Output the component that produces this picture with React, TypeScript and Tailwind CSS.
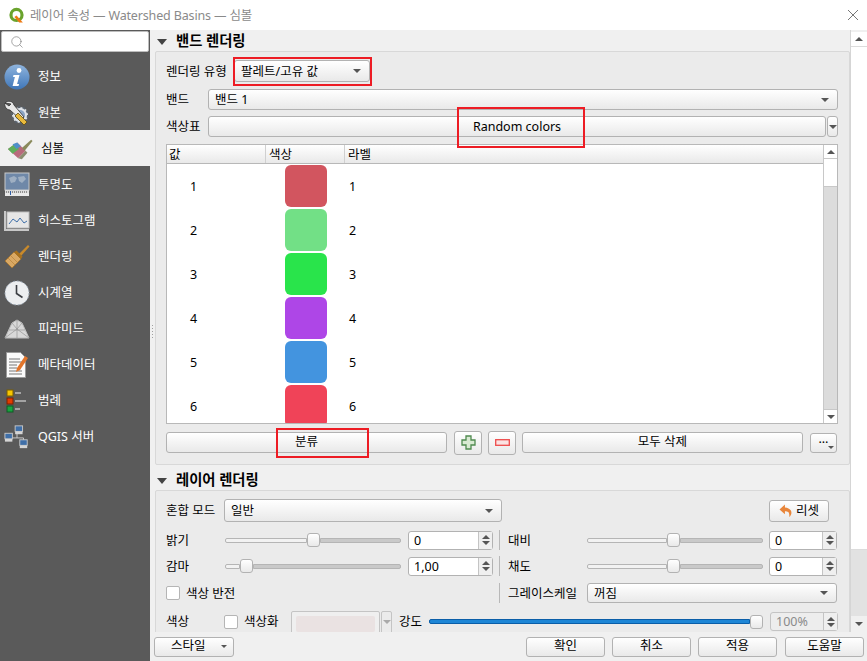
import type { ReactNode } from 'react';
import { Search } from 'lucide-react';

const FONT = "font-['Noto_Sans','Noto_Sans_CJK_KR',sans-serif]";
const BTN = 'border border-[#b2b2b2] rounded-[3px] bg-gradient-to-b from-white to-[#e9e9e9]';
// the fonts here sit a pixel higher than in the reference
const L = 'pt-[2px] whitespace-nowrap';

// small triangles used by combos, scrollbars and spin boxes
function Tri({ up, className = 'border-t-[#555]' }: { up?: boolean; className?: string }) {
  return up ? (
    <span className="block w-0 h-0 border-x-[4px] border-x-transparent border-b-[4px] border-b-[#555]" />
  ) : (
    <span className={`block w-0 h-0 border-x-[4px] border-x-transparent border-t-[4px] ${className}`} />
  );
}

function Logo() {
  return (
    <svg width="17" height="17" viewBox="0 0 16 16">
      <circle cx="8" cy="7.500" r="5.200" fill="none" stroke="#6aa32d" strokeWidth="3" />
      <path d="M8 8l6 6.500h-3.500L6 9.500z" fill="#ee7913" />
    </svg>
  );
}

const icons: Record<string, ReactNode> = {
  info: (
    <svg width="26" height="26" viewBox="0 0 26 26">
      <defs>
        <linearGradient id="ib" x1="0" y1="0" x2="0" y2="1">
          <stop offset="0" stopColor="#8fb4dd" />
          <stop offset="1" stopColor="#3f76b8" />
        </linearGradient>
      </defs>
      <circle cx="13" cy="13" r="12.500" fill="url(#ib)" />
      <circle cx="15" cy="6.500" r="2.400" fill="#fff" />
      <path d="M9.500 11h6l-2.400 9h2l-.6 2H8.600l2.300-9H9z" fill="#fff" />
    </svg>
  ),
  source: (
    <svg width="26" height="26" viewBox="0 0 26 26">
      <circle cx="16" cy="15" r="8" fill="#dfe3e8" stroke="#59626c" strokeWidth="2" strokeDasharray="3 2" />
      <circle cx="16" cy="15" r="5" fill="#8aa4c4" />
      <path d="M1 3c3-3 8-2 9 2l10 12-3 3L6 10C3 10 0 7 1 3l4 3 2-2z" fill="#e8e8e8" stroke="#333" strokeWidth=".8" />
      <path d="M14 13l9 9-3 3-9-9z" fill="#e8b93c" stroke="#5c4a12" strokeWidth=".8" />
    </svg>
  ),
  symbol: (
    <svg width="28" height="24" viewBox="0 0 28 24">
      <path d="M1 12L11 5l9 9-8 8z" fill="#b86a7c" />
      <path d="M1 12L8 7l5 5-7 5z" fill="#5fae5a" />
      <path d="M6 7l5-2 4 4-5 3z" fill="#4f8fc9" />
      <path d="M12 22l8-8 2 2-6 7z" fill="#8b8d70" />
      <path d="M16 11L26 2l1.500 1.500L19 14z" fill="#8a8a5c" />
    </svg>
  ),
  transparency: (
    <svg width="26" height="26" viewBox="0 0 26 26">
      <rect x="1" y="1" width="24" height="17" fill="#6f88a8" stroke="#c9c9c9" />
      <path d="M5 6l5-2 3 2-2 4-4 1zM14 5l6-1 2 3-4 4-3-2z" fill="#9fafc2" />
      <rect x="1" y="18" width="24" height="3" fill="#dcdcdc" />
      <rect x="1" y="21" width="24" height="3" fill="#e8e8e8" />
      <path d="M2 20h22" stroke="#444" strokeDasharray="1 1" />
      <rect x="6" y="19" width="1" height="4" fill="#2f5fa8" />
    </svg>
  ),
  histogram: (
    <svg width="26" height="22" viewBox="0 0 26 22">
      <rect x="3" y="2" width="22" height="16" fill="#e6e6e6" stroke="#bdbdbd" />
      <path d="M1 1v19h24" fill="none" stroke="#c8c8c8" strokeWidth="2" />
      <path d="M5 14l4-5 4 3 3-4 4 5 3-2" fill="none" stroke="#3f6fa8" />
    </svg>
  ),
  render: (
    <svg width="26" height="26" viewBox="0 0 26 26">
      <path d="M15 10L24 1l1.500 1.500L17 12z" fill="#c98a2b" />
      <path d="M1 17l9-9 7 7-9 9z" fill="#d9a864" stroke="#a86f1c" strokeWidth=".6" />
      <path d="M10 8l7 7 1.500-2.500-6-6z" fill="#a8701c" />
      <path d="M4 14l7 7M6.500 11.500l7 7" stroke="#b5813a" strokeWidth=".7" />
    </svg>
  ),
  clock: (
    <svg width="26" height="26" viewBox="0 0 26 26">
      <circle cx="13" cy="13" r="12" fill="#eceef0" stroke="#9aa7b5" strokeDasharray="2 2" />
      <path d="M12.500 5v8.500l6 4" fill="none" stroke="#3c3f44" strokeWidth="1.600" />
    </svg>
  ),
  pyramid: (
    <svg width="26" height="22" viewBox="0 0 26 22">
      <path d="M1 20L8 5l5-3 5 3 7 15z" fill="#d8d8d8" stroke="#bdbdbd" />
      <path d="M13 2v18M8 5l5 6 5-6M5 12h16M1 20l12-9 12 9" fill="none" stroke="#8a8a8a" strokeWidth=".6" />
    </svg>
  ),
  meta: (
    <svg width="24" height="28" viewBox="0 0 24 28">
      <path d="M1.500 1.500h14l5 5v20h-19z" fill="#fbfbfb" stroke="#9a9a9a" />
      <path d="M4 8h11M4 11h13M4 14h8M4 17h8M4 20h13M4 23h13" stroke="#777" />
      <path d="M12 17L20 5l3 2-8 12-4 2z" fill="#e2752b" />
    </svg>
  ),
  legend: (
    <svg width="22" height="24" viewBox="0 0 22 24">
      <rect x="1" y="1" width="6" height="6" fill="#f7c600" stroke="#7a5f00" />
      <rect x="1" y="9" width="6" height="6" fill="#e23b00" stroke="#7a2000" />
      <rect x="1" y="17" width="6" height="6" fill="#19a340" stroke="#0e5c24" />
      <path d="M9 4h6M9 12h11M9 20h5" stroke="#a3a3a3" strokeWidth="2" />
    </svg>
  ),
  server: (
    <svg width="28" height="26" viewBox="0 0 28 26">
      <path d="M8 14h13M14 8v6M21 14v4" stroke="#cfcfcf" />
      <rect x="12" y="1" width="8" height="6" fill="#3f6fa8" stroke="#c7c7c7" />
      <rect x="12" y="7" width="8" height="3" fill="#d5d5d5" />
      <rect x="1" y="9" width="8" height="6" fill="#3f6fa8" stroke="#c7c7c7" />
      <rect x="1" y="15" width="8" height="3" fill="#d5d5d5" />
      <rect x="17" y="16" width="8" height="6" fill="#3f6fa8" stroke="#c7c7c7" />
      <rect x="17" y="22" width="8" height="3" fill="#d5d5d5" />
    </svg>
  ),
};

const NAV = [
  ['info', '정보'],
  ['source', '원본'],
  ['symbol', '심볼'],
  ['transparency', '투명도'],
  ['histogram', '히스토그램'],
  ['render', '렌더링'],
  ['clock', '시계열'],
  ['pyramid', '피라미드'],
  ['meta', '메타데이터'],
  ['legend', '범례'],
  ['server', 'QGIS 서버'],
];

const ROWS = [
  [1, '#d2555f'],
  [2, '#72e086'],
  [3, '#29e44b'],
  [4, '#ae46e7'],
  [5, '#4394df'],
  [6, '#f04358'],
] as const;

function Combo({ text, className }: { text: string; className: string }) {
  return (
    <div className={`${BTN} flex items-center justify-between pl-[6px] pr-[8px] ${className}`}>
      <span className={L}>{text}</span>
      <Tri />
    </div>
  );
}

function Slider({ left, right }: { left: number; right: number }) {
  return (
    <div className="flex items-center w-[176px]">
      <div className="h-[5px] border border-[#b5b5b5] bg-[#f2f2f2] rounded-l-[2px]" style={{ width: left }} />
      <div className={`${BTN} w-[13px] h-[14px] shrink-0`} />
      <div className="h-[5px] border border-[#b5b5b5] bg-[#c9c9c9] rounded-r-[2px]" style={{ width: right }} />
    </div>
  );
}

function Spin({ value, className, disabled }: { value: string; className: string; disabled?: boolean }) {
  return (
    <div className={`flex h-[19px] border rounded-[3px] ${disabled ? 'border-[#c4c4c4] text-[#8a8a8a] bg-[#ededed]' : 'border-[#b2b2b2] bg-white'} ${className}`}>
      <span className="flex-1 pl-[5px] leading-[18px]">{value}</span>
      <span className="w-[14px] border-l border-[#c4c4c4] bg-[#efefef] flex flex-col items-center justify-center gap-[2px]">
        <Tri up />
        <Tri />
      </span>
    </div>
  );
}

function Section({ title }: { title: string }) {
  return (
    <div className="flex items-center h-full pl-[2px] gap-[9px]">
      <span className="block w-0 h-0 border-x-[5px] border-x-transparent border-t-[6px] border-t-[#444]" />
      <span className="font-bold text-[14.300px] leading-none">{title}</span>
    </div>
  );
}

function Check() {
  return <span className="block w-[14px] h-[14px] border border-[#b5b5b5] rounded-[2px] bg-white shrink-0" />;
}

function Divider() {
  return <span className="block w-px h-[20px] bg-[#b8b8b8] ml-[6px] mr-[8px] shrink-0" />;
}

export default function App() {
  return (
    <div className={`${FONT} relative w-[867px] h-[661px] overflow-hidden flex flex-col bg-[#f0f0f0] text-[12.500px] text-black`}>
      <div className="h-[30px] shrink-0 bg-white flex items-center pl-[8px] pr-[8px] gap-[5px] text-[#8a8a8a]">
        <Logo />
        <span className={`${L} tracking-[-0.15px]`}>레이어 속성 — Watershed Basins — 심볼</span>
        <svg className="ml-auto" width="12" height="12" viewBox="0 0 12 12">
          <path d="M1 1l10 10M11 1L1 11" stroke="#777" />
        </svg>
      </div>

      <div className="flex-1 flex min-h-0">
        <aside className="w-[150px] shrink-0 bg-[#5a5a5a] text-white flex flex-col">
          <div className="h-[21px] mx-px mt-px bg-white border border-[#bdbdbd] rounded-[2px] flex items-center pl-[8px] text-[#777] shrink-0">
            <Search size={14} strokeWidth={1.1} />
          </div>
          <div className="pt-[6px]">
            {NAV.map(([key, label]) => {
              const on = key === 'symbol';
              return (
                <div key={key} className={`h-[36px] flex items-center ${on ? 'bg-[#f0f0f0] text-black pl-[7px]' : 'pl-[4px]'}`}>
                  <span className="w-[26px] flex justify-center shrink-0 pt-[2px]">{icons[key]}</span>
                  <span className={`ml-[8px] ${L}`}>{label}</span>
                </div>
              );
            })}
          </div>
        </aside>

        {/* splitter */}
        <div className="w-[4px] shrink-0 flex flex-col items-center justify-center gap-[2px] pb-[28px]">
          {[0, 1, 2, 3, 4].map((i) => (
            <span key={i} className="block w-px h-px bg-[#a0a0a0]" />
          ))}
        </div>

        <main className="flex-1 min-w-0 flex flex-col">
          <div className="h-[602px] flex overflow-hidden">
            <div className="w-[696px] shrink-0 pl-px">
              <div className="h-[21px] pt-[2px]">
                <Section title="밴드 렌더링" />
              </div>
              <div className="h-[414px] border border-[#d8d8d8] rounded-[2px] bg-[#ebebeb] pl-[10px] pr-[11px] pt-[8px]">
                <div className="flex items-center h-[22px]">
                  <span className={`w-[68px] ${L}`}>렌더링 유형</span>
                  <Combo text="팔레트/고유 값" className="w-[136px] h-[22px]" />
                </div>
                <div className="flex items-center h-[21px] mt-[7px]">
                  <span className={`w-[42px] ${L}`}>밴드</span>
                  <Combo text="밴드 1" className="flex-1 h-[21px]" />
                </div>
                <div className="flex items-center h-[21px] mt-[6px]">
                  <span className={`w-[42px] ${L}`}>색상표</span>
                  <div className={`${BTN} flex-1 h-[21px] flex items-center justify-center`}>
                    <span className={L}>Random colors</span>
                  </div>
                  <div className={`${BTN} w-[11px] h-[21px] ml-px flex items-center justify-center`}>
                    <Tri />
                  </div>
                </div>

                <div className="h-[280px] mt-[7px] border border-[#b8b8b8] bg-white flex overflow-hidden">
                  <div className="flex-1 min-w-0">
                    <div className="h-[19px] flex bg-gradient-to-b from-white to-[#e9e9e9] border-b border-[#b8b8b8]">
                      <span className="w-[99px] pl-[2px] border-r border-[#d0d0d0] leading-[20px]">값</span>
                      <span className="w-[79px] pl-[3px] border-r border-[#d0d0d0] leading-[20px]">색상</span>
                      <span className="pl-[3px] leading-[20px]">라벨</span>
                    </div>
                    {ROWS.map(([n, color]) => (
                      <div key={n} className="h-[44px] flex items-center shrink-0">
                        <span className={`w-[99px] pl-[23px] ${L}`}>{n}</span>
                        <span className="w-[79px] flex justify-center">
                          <span className="block w-[42px] h-[42px] rounded-[6px]" style={{ background: color }} />
                        </span>
                        <span className={`pl-[4px] ${L}`}>{n}</span>
                      </div>
                    ))}
                  </div>
                  <div className="w-[14px] shrink-0 border-l border-[#c8c8c8] bg-[#dcdcdc] flex flex-col">
                    <div className="h-[14px] bg-white flex items-center justify-center border-b border-[#c8c8c8]">
                      <Tri up />
                    </div>
                    <div className="h-[28px] bg-white border-b border-[#c8c8c8]" />
                    <div className="flex-1" />
                    <div className="h-[14px] bg-white flex items-center justify-center border-t border-[#c8c8c8]">
                      <Tri />
                    </div>
                  </div>
                </div>

                <div className="flex items-center mt-[8px] h-[21px]">
                  <div className={`${BTN} w-[281px] h-[21px] flex items-center justify-center`}>분류</div>
                  <div className={`${BTN} w-[28px] h-[24px] ml-[7px] flex items-center justify-center shrink-0`}>
                    <svg width="15" height="15" viewBox="0 0 15 15">
                      <path d="M5 1h5v4h4v5h-4v4H5v-4H1V5h4z" fill="#d9ead3" stroke="#4f8a4f" strokeWidth="1.300" />
                    </svg>
                  </div>
                  <div className={`${BTN} w-[28px] h-[24px] ml-[6px] flex items-center justify-center shrink-0`}>
                    <svg width="15" height="7" viewBox="0 0 15 7">
                      <rect x=".7" y=".7" width="13.600" height="5.600" fill="#fbe3e3" stroke="#ee4b4b" strokeWidth="1.300" />
                    </svg>
                  </div>
                  <div className={`${BTN} w-[281px] h-[21px] ml-[6px] flex items-center justify-center`}>모두 삭제</div>
                  <div className={`${BTN} relative w-[27px] h-[20px] ml-[7px] flex items-center justify-center`}>
                    <span className="leading-none pb-[6px]">…</span>
                    <span className="absolute right-[2px] bottom-[3px]">
                      <span className="block w-0 h-0 border-x-[3px] border-x-transparent border-t-[3px] border-t-[#555]" />
                    </span>
                  </div>
                </div>
              </div>

              <div className="h-[25px] pt-[6px]">
                <Section title="레이어 렌더링" />
              </div>
              <div className="h-[160px] border border-[#d8d8d8] rounded-[2px] bg-[#ebebeb] pl-[10px] pr-[11px] pt-[8px]">
                <div className="flex items-center h-[23px]">
                  <span className={`w-[58px] ${L}`}>혼합 모드</span>
                  <Combo text="일반" className="w-[278px] h-[23px]" />
                  <div className={`${BTN} w-[60px] h-[22px] ml-[267px] flex items-center justify-center gap-[3px]`}>
                    <svg width="14" height="14" viewBox="0 0 13 13">
                      <path d="M5.500 .5L.5 5l5 4.500V6.800c3 0 4.500 1 4 5.200 3-2 3.500-8-4-8.800z" fill="#e8853a" />
                    </svg>
                    <span className={L}>리셋</span>
                  </div>
                </div>

                <div className="flex items-center h-[20px] mt-[8px]">
                  <span className={`w-[59px] ${L}`}>밝기</span>
                  <Slider left={82} right={81} />
                  <Spin value="0" className="w-[85px] ml-[7px]" />
                  <Divider />
                  <span className={`w-[79px] ${L}`}>대비</span>
                  <Slider left={80} right={83} />
                  <Spin value="0" className="w-[68px] ml-[6px]" />
                </div>
                <div className="flex items-center h-[20px] mt-[6px]">
                  <span className={`w-[59px] ${L}`}>감마</span>
                  <Slider left={15} right={148} />
                  <Spin value="1,00" className="w-[85px] ml-[7px]" />
                  <Divider />
                  <span className={`w-[79px] ${L}`}>채도</span>
                  <Slider left={80} right={83} />
                  <Spin value="0" className="w-[68px] ml-[6px]" />
                </div>
                <div className="flex items-center h-[20px] mt-[7px]">
                  <Check />
                  <span className={`ml-[6px] w-[307px] ${L}`}>색상 반전</span>
                  <Divider />
                  <span className={`w-[79px] ${L}`}>그레이스케일</span>
                  <Combo text="꺼짐" className="w-[250px] h-[20px]" />
                </div>
                <div className="flex h-[21px] mt-[8px]">
                  <div className="flex items-center h-[21px] w-[58px] shrink-0">
                    <span className={L}>색상</span>
                  </div>
                  <div className="flex items-center h-[21px] w-[67px] shrink-0">
                    <Check />
                    <span className={`ml-[6px] ${L}`}>색상화</span>
                  </div>
                  <div className="w-[89px] h-[26px] border border-[#c4c4c4] rounded-[2px] p-[4px] bg-[#efefef] shrink-0">
                    <div className="h-full bg-[#eae2e2] rounded-[2px]" />
                  </div>
                  <div className="w-[11px] h-[26px] ml-px border border-[#c4c4c4] rounded-[2px] flex items-center justify-center pb-[5px] shrink-0">
                    <Tri className="border-t-[#aaa]" />
                  </div>
                  <div className="flex items-center h-[21px] flex-1">
                    <span className={`ml-[7px] w-[30px] ${L}`}>강도</span>
                    <div className="flex items-center w-[334px]">
                      <div className="flex-1 h-[5px] border border-[#0a5ea8] bg-[#1e86d6] rounded-l-[2px]" />
                      <div className={`${BTN} w-[13px] h-[14px] shrink-0`} />
                    </div>
                    <Spin value="100%" disabled className="w-[68px] ml-[7px]" />
                  </div>
                </div>
              </div>
            </div>

            <div className="w-[17px] shrink-0 border-l border-[#d5d5d5] flex flex-col">
              <div className="h-[14px] mt-[2px] bg-white flex items-center justify-center">
                <Tri up />
              </div>
              <div className="h-[504px] bg-white border-t border-[#dcdcdc] border-b" />
              <div className="flex-1 bg-[#e2e2e2]" />
              <div className="h-[16px] flex items-center justify-center bg-[#f0f0f0]">
                <Tri />
              </div>
            </div>
          </div>

          <div className="flex-1 flex items-center pr-[3px]">
            <div className={`${BTN} w-[80px] h-[20px] flex items-center justify-between pl-[16px] pr-[6px]`}>
              <span>스타일</span>
              <span className="block w-0 h-0 border-x-[3px] border-x-transparent border-t-[3px] border-t-[#555]" />
            </div>
            <div className="ml-auto flex gap-[7px]">
              {['확인', '취소', '적용'].map((b) => (
                <div key={b} className={`${BTN} w-[79px] h-[20px] flex items-center justify-center`}>
                  {b}
                </div>
              ))}
              <div className={`${BTN} w-[79px] h-[20px] ml-px flex items-center justify-center`}>도움말</div>
            </div>
          </div>
        </main>
      </div>

      {/* red annotation boxes drawn on top of the dialog */}
      <div className="absolute left-[233px] top-[57px] w-[139px] h-[29px] border-2 border-[#ed1c24]" />
      <div className="absolute left-[457px] top-[107px] w-[128px] h-[41px] border-2 border-[#ed1c24]" />
      <div className="absolute left-[276px] top-[428px] w-[93px] h-[30px] border-2 border-[#ed1c24]" />
    </div>
  );
}
